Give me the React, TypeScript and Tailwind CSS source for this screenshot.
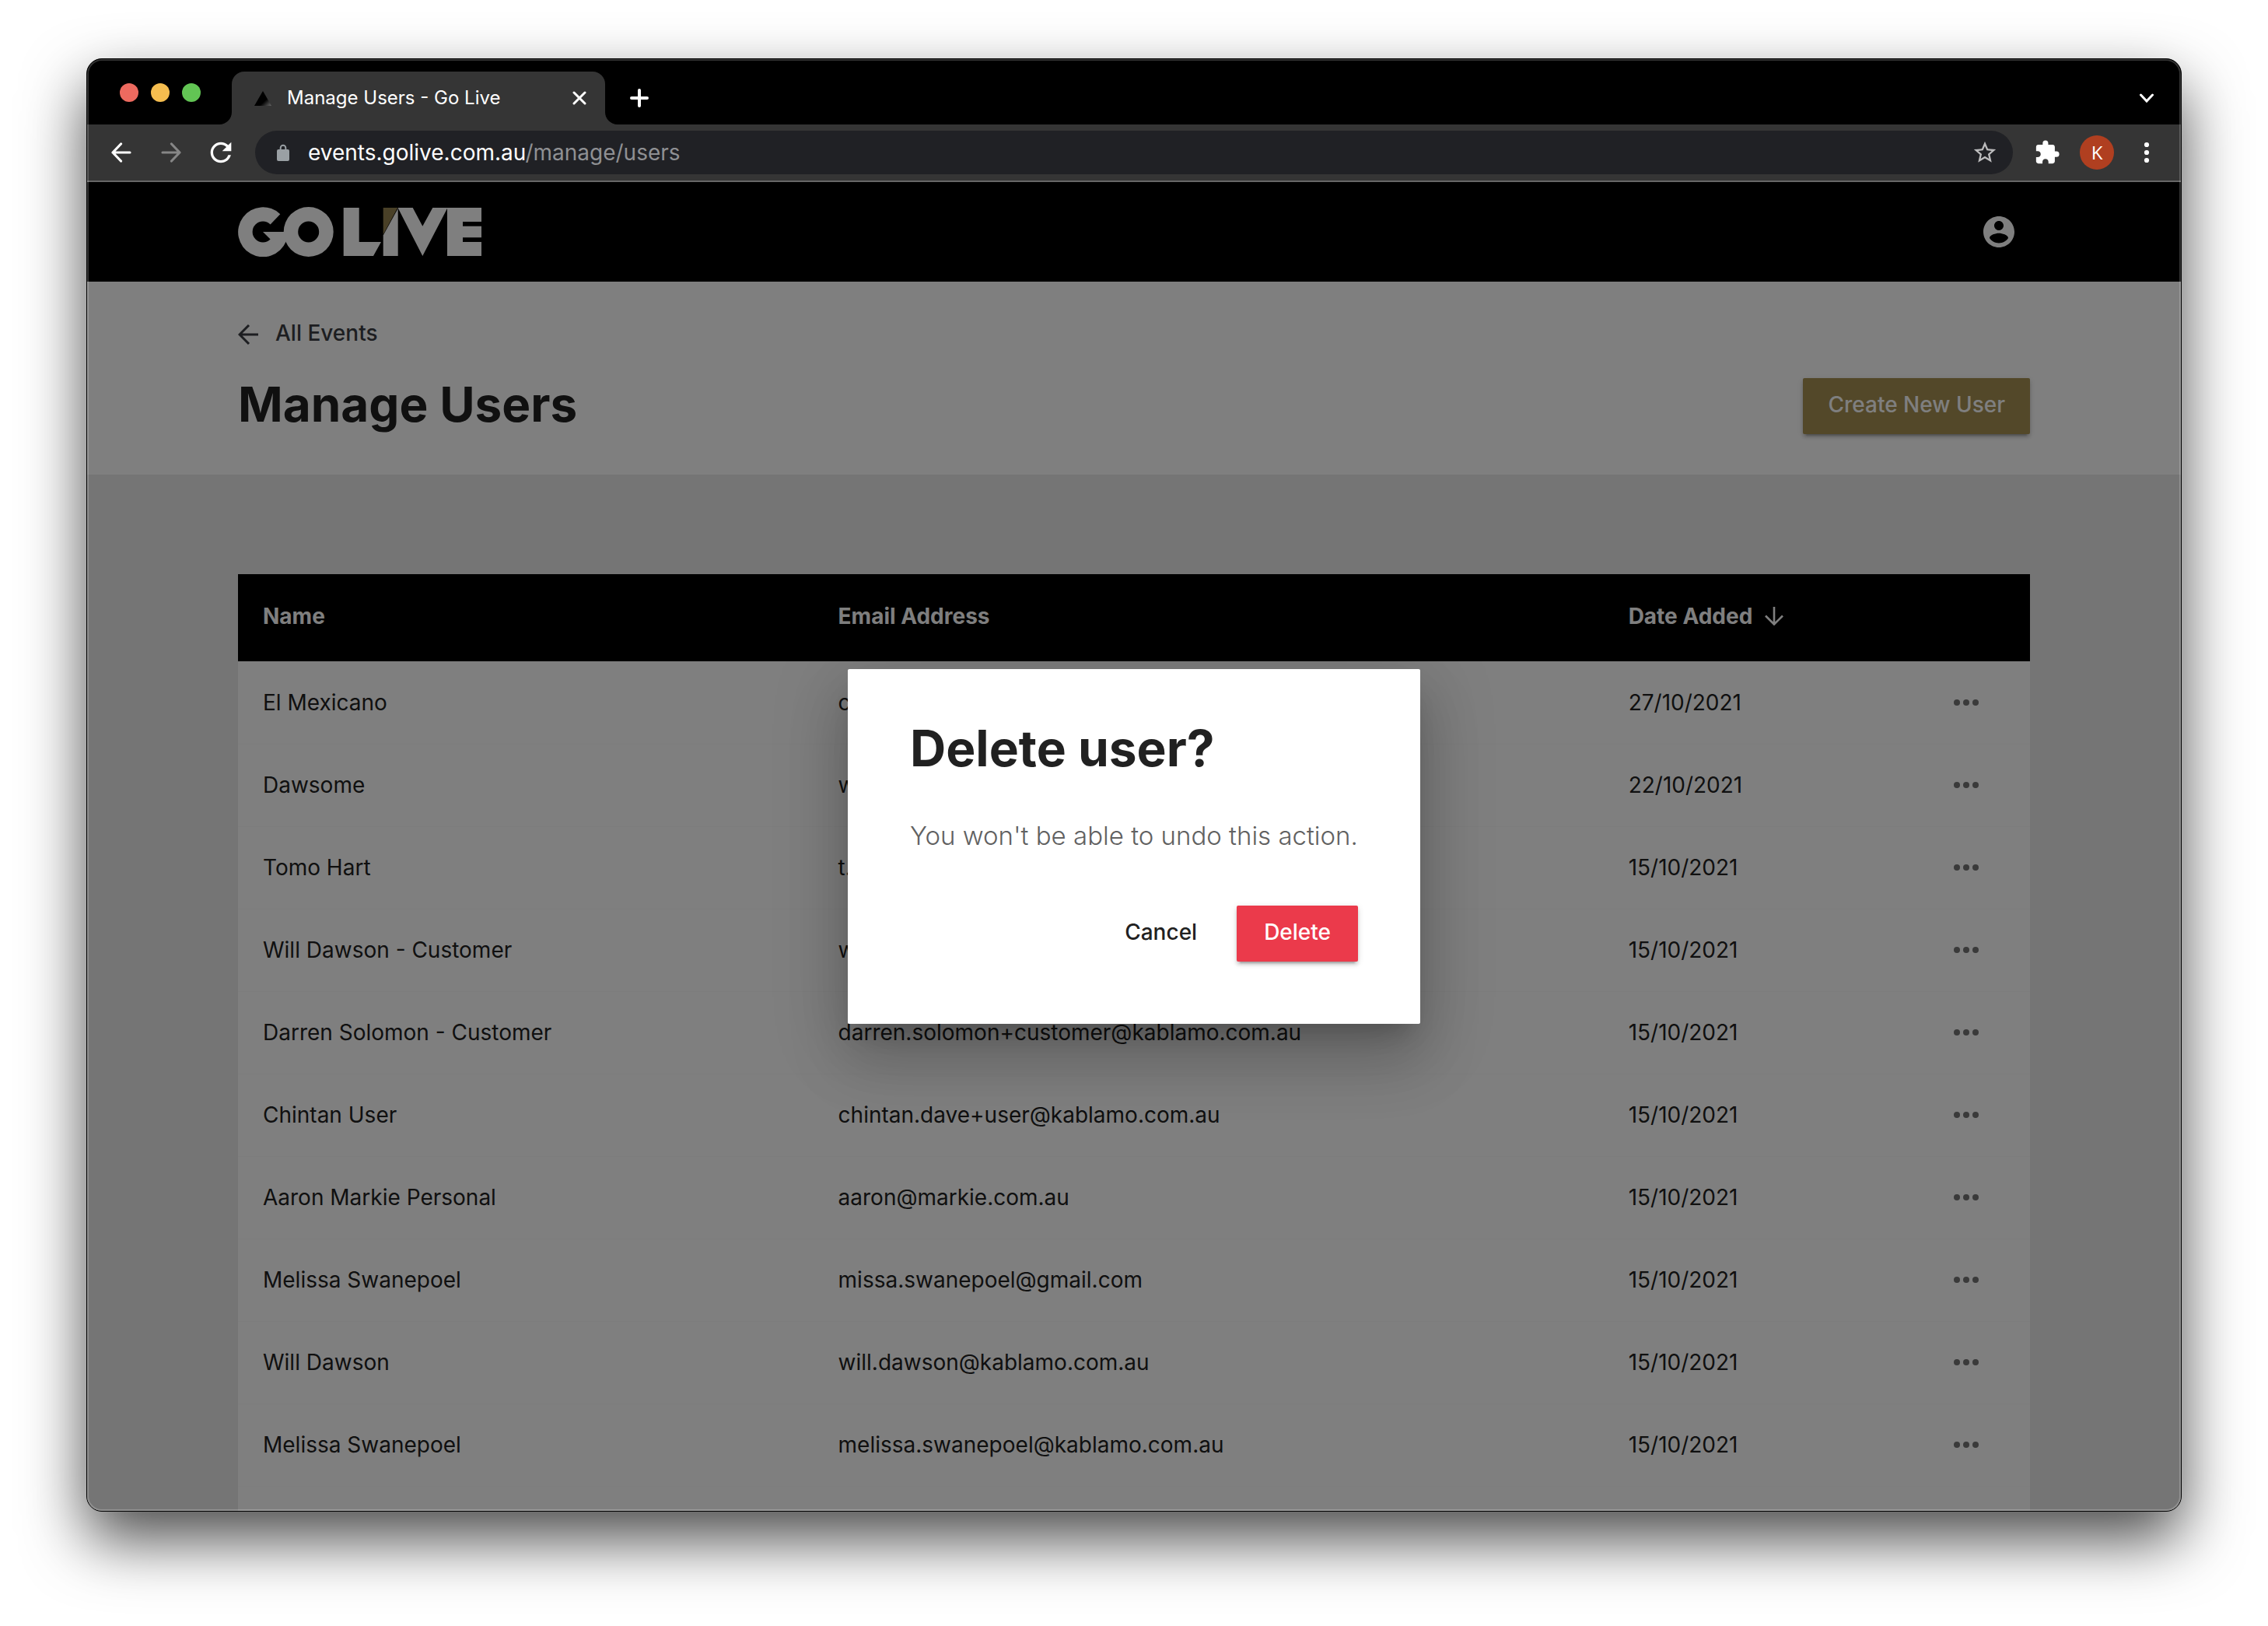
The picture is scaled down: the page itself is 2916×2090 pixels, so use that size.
import React from "react";
import { MdExtension, MdRefresh, MdStarBorder } from "react-icons/md";

type User = { name: string; email: string; added: string };

const users: User[] = [
  { name: "El Mexicano", email: "c.mexicano@kablamo.com.au", added: "27/10/2021" },
  { name: "Dawsome", email: "will.dawson+dawsome@kablamo.com.au", added: "22/10/2021" },
  { name: "Tomo Hart", email: "t.hart@kablamo.com.au", added: "15/10/2021" },
  { name: "Will Dawson - Customer", email: "will.dawson+customer@kablamo.com.au", added: "15/10/2021" },
  { name: "Darren Solomon - Customer", email: "darren.solomon+customer@kablamo.com.au", added: "15/10/2021" },
  { name: "Chintan User", email: "chintan.dave+user@kablamo.com.au", added: "15/10/2021" },
  { name: "Aaron Markie Personal", email: "aaron@markie.com.au", added: "15/10/2021" },
  { name: "Melissa Swanepoel", email: "missa.swanepoel@gmail.com", added: "15/10/2021" },
  { name: "Will Dawson", email: "will.dawson@kablamo.com.au", added: "15/10/2021" },
  { name: "Melissa Swanepoel", email: "melissa.swanepoel@kablamo.com.au", added: "15/10/2021" },
];

function Logo() {
  return (
    <svg width="313" height="64" viewBox="0 0 313 64" role="img" aria-label="Go Live" fill="#ffffff">
      {/* ring with an angled opening and a crossbar */}
      <path d="M54.3 9.2A32 32 0 1 0 61.7 44.5V32H32L41.6 41.6A13.5 13.5 0 1 1 41.6 22.4Z" />
      <path
        fillRule="evenodd"
        d="M90.7 0a32 32 0 1 0 0 64a32 32 0 1 0 0-64ZM90.7 18.5a13.5 13.5 0 1 1 0 27a13.5 13.5 0 1 1 0-27Z"
      />
      <path d="M135.7 1H155.7V45H184L174 63H135.7Z" />
      <path fill="#93804f" d="M186.7 1H205.2L186.7 35.5Z" />
      <path d="M205.7 2V63H186.7V36.5Z" />
      <path d="M205.5 1H224.7L237.3 24.7L250.3 1H269.5L237.3 63Z" />
      <path d="M269 1H313V19H289V24.7H313V39.3H289V45H313V63H269Z" />
    </svg>
  );
}

function Dots({ vertical = false }: { vertical?: boolean }) {
  return vertical ? (
    <svg width="8" height="28" viewBox="0 0 8 28" fill="currentColor" aria-hidden="true">
      <circle cx="4" cy="4" r="3.1" />
      <circle cx="4" cy="14" r="3.1" />
      <circle cx="4" cy="24" r="3.1" />
    </svg>
  ) : (
    <svg width="32" height="8" viewBox="0 0 32 8" fill="currentColor" aria-hidden="true">
      <circle cx="4" cy="4" r="4" />
      <circle cx="16" cy="4" r="4" />
      <circle cx="28" cy="4" r="4" />
    </svg>
  );
}

function NavArrow({ forward = false }: { forward?: boolean }) {
  return (
    <svg width="26" height="26" viewBox="0 0 26 26" fill="none" stroke="currentColor" strokeWidth="3.2" strokeLinecap="round" strokeLinejoin="round" aria-hidden="true">
      <path d={forward ? "M2 13H24M13.5 2L24 13L13.5 24" : "M24 13H2M12.5 2L2 13L12.5 24"} />
    </svg>
  );
}

function TabStrip() {
  return (
    <div className="flex items-center bg-black pt-4 pr-[35px] pl-[42px] text-white">
      <div className="mr-10 flex gap-4 pb-[14px]">
        <button aria-label="Close window" className="size-6 rounded-full bg-[#ed6a5f]" />
        <button aria-label="Minimise window" className="size-6 rounded-full bg-[#f5bd4f]" />
        <button aria-label="Zoom window" className="size-6 rounded-full bg-[#62c554]" />
      </div>
      <div className="relative flex h-[68px] w-[480px] items-center rounded-t-2xl bg-[#353535] pr-6 pl-[29px]">
        <svg className="absolute bottom-0 -left-4" width="16" height="16" viewBox="0 0 16 16" fill="#353535" aria-hidden="true">
          <path d="M16 0V16H0A16 16 0 0 0 16 0Z" />
        </svg>
        <svg className="absolute -right-4 bottom-0" width="16" height="16" viewBox="0 0 16 16" fill="#353535" aria-hidden="true">
          <path d="M0 0V16H16A16 16 0 0 1 0 0Z" />
        </svg>
        <svg width="22" height="19" viewBox="0 0 22 19" aria-hidden="true">
          <defs>
            <linearGradient id="favicon" x1="0.45" y1="0.5" x2="1" y2="1">
              <stop offset="0.3" stopColor="#000000" />
              <stop offset="1" stopColor="#6a6a6a" />
            </linearGradient>
          </defs>
          <path d="M11 0L22 19H0Z" fill="url(#favicon)" />
        </svg>
        <span className="ml-5 flex-1 text-2xl">Manage Users - Go Live</span>
        <button aria-label="Close tab">
          <svg width="18" height="18" viewBox="0 0 18 18" stroke="currentColor" strokeWidth="3" strokeLinecap="round" aria-hidden="true">
            <path d="M2 2L16 16M16 2L2 16" />
          </svg>
        </button>
      </div>
      <button aria-label="New tab" className="ml-8">
        <svg width="24" height="24" viewBox="0 0 24 24" stroke="currentColor" strokeWidth="4" strokeLinecap="round" aria-hidden="true">
          <path d="M12 2V22M2 12H22" />
        </svg>
      </button>
      <button aria-label="Search tabs" className="ml-auto">
        <svg width="18" height="12" viewBox="0 0 18 12" fill="none" stroke="currentColor" strokeWidth="3" strokeLinecap="round" aria-hidden="true">
          <path d="M1.5 2L9 10L16.5 2" />
        </svg>
      </button>
    </div>
  );
}

function Toolbar() {
  const slot = "flex h-14 w-16 items-center justify-center";
  return (
    <div className="flex items-center border-b-2 border-[#676767] bg-[#353535] px-3 py-2 text-white">
      <button aria-label="Back" className={slot}>
        <NavArrow />
      </button>
      <button aria-label="Forward" className={slot + " text-[#868686]"}>
        <NavArrow forward />
      </button>
      <button aria-label="Reload" className={slot}>
        <MdRefresh size={40} />
      </button>
      <div className="mx-3 flex h-14 flex-1 items-center rounded-full bg-[#202125] pr-[19px] pl-7">
        <svg width="16" height="22" viewBox="0 0 16 22" aria-hidden="true">
          <rect x="0" y="7" width="16" height="15" rx="2" fill="#9aa0a4" />
          <path d="M4.700 8V5A3.300 3.300 0 0 1 11.300 5V8" fill="none" stroke="#9aa0a4" strokeWidth="2" />
        </svg>
        <div className="ml-6 flex-1 text-[28px] leading-10 text-[#8f9093]">
          <span className="text-white">events.golive.com.au</span>/manage/users
        </div>
        <button aria-label="Bookmark this page" className="text-[#bcbcbd]">
          <MdStarBorder size={34} />
        </button>
      </div>
      <button aria-label="Extensions" className={slot}>
        <MdExtension size={34} />
      </button>
      <button aria-label="Profile" className={slot}>
        <span className="flex size-11 items-center justify-center rounded-full bg-[#b03f20] font-['Open_Sans',sans-serif] text-2xl">K</span>
      </button>
      <button aria-label="Menu" className={slot}>
        <Dots vertical />
      </button>
    </div>
  );
}

function SiteHeader() {
  return (
    <header className="bg-black px-[194px]">
      <div className="flex h-32 items-center justify-between pr-4">
        <Logo />
        <button aria-label="Account" className="text-white">
          <svg width="48" height="48" viewBox="0 0 24 24" fill="currentColor" aria-hidden="true">
            <path d="M12 2C6.480 2 2 6.480 2 12s4.480 10 10 10 10-4.480 10-10S17.520 2 12 2zm0 3c1.660 0 3 1.340 3 3s-1.340 3-3 3-3-1.340-3-3 1.340-3 3-3zm0 14.200c-2.500 0-4.710-1.280-6-3.220.03-1.990 4-3.080 6-3.080 1.990 0 5.970 1.090 6 3.080-1.290 1.940-3.500 3.220-6 3.220z" />
          </svg>
        </button>
      </div>
    </header>
  );
}

function PageTitle() {
  return (
    <section className="bg-white px-[194px] pt-[46px] pb-[52px]">
      <a href="#events" className="flex h-10 w-fit items-center gap-[22px] text-[28px] font-medium text-[#3a3d42]">
        <svg className="mt-1" width="26" height="26" viewBox="0 0 26 26" fill="none" stroke="currentColor" strokeWidth="3" aria-hidden="true">
          <path d="M26 13H2M14 1L2 13L14 25" />
        </svg>
        All Events
      </a>
      <div className="mt-[38px] flex h-[72px] items-center justify-between">
        <h1 className="pb-1 text-[62px] leading-[68px] font-bold text-[#212121]">Manage Users</h1>
        <button className="h-[72px] rounded-xs bg-[#a69052] px-8 pb-1 text-[28px] font-medium text-white shadow-[0_6px_2px_-4px_rgba(0,0,0,0.2),0_4px_4px_rgba(0,0,0,0.14),0_2px_10px_rgba(0,0,0,0.12)]">
          Create New User
        </button>
      </div>
    </section>
  );
}

function UserTable() {
  return (
    <table className="w-full table-fixed border-collapse text-left text-[28px] leading-10 text-[#212121]">
      <colgroup>
        <col className="w-[32.1%]" />
        <col className="w-[44.1%]" />
        <col />
        <col className="w-32" />
      </colgroup>
      <thead>
        <tr className="h-28 bg-black text-white">
          <th className="px-8 pb-1 font-bold">Name</th>
          <th className="px-8 pb-1 font-bold">Email Address</th>
          <th className="px-8 pb-1 font-bold" aria-sort="descending">
            <button className="flex items-center gap-4">
              Date Added
              <svg width="24" height="24" viewBox="0 0 24 24" fill="none" stroke="currentColor" strokeWidth="2.600" aria-hidden="true">
                <path d="M12 0V22M1 11.500L12 22.500L23 11.500" />
              </svg>
            </button>
          </th>
          <th aria-label="Actions" />
        </tr>
      </thead>
      <tbody>
        {users.map((user) => (
          <tr key={user.email} className="h-[106px] border-b border-[#fafafa]">
            <td className="px-8">{user.name}</td>
            <td className="px-8">{user.email}</td>
            <td className="px-8">{user.added}</td>
            <td className="text-[#757575]">
              <button aria-label={"Actions for " + user.name} className="ml-[30px] flex h-8 items-center">
                <Dots />
              </button>
            </td>
          </tr>
        ))}
      </tbody>
    </table>
  );
}

function DeleteDialog() {
  return (
    <div className="absolute inset-0 flex items-center justify-center bg-black/50">
      <div
        role="dialog"
        aria-modal="true"
        aria-labelledby="delete-title"
        className="w-[736px] rounded-xs bg-white px-20 pt-16 pb-20 shadow-[0_22px_30px_-14px_rgba(0,0,0,0.2),0_48px_76px_6px_rgba(0,0,0,0.14),0_18px_92px_16px_rgba(0,0,0,0.12)]"
      >
        <h2 id="delete-title" className="text-[64px] leading-[76px] font-bold text-[#212121]">
          Delete user?
        </h2>
        <p className="mt-[50px] text-[33px] leading-[48px] font-light whitespace-nowrap text-[#616161]">
          You won't be able to undo this action.
        </p>
        <div className="mt-[66px] flex justify-end gap-4">
          <button className="h-[72px] px-[35px] pb-1 text-[28px] font-medium text-[#212121]">Cancel</button>
          <button className="h-[72px] rounded-xs bg-[#eb3a4b] px-[35px] pb-1 text-[28px] font-medium text-white shadow-[0_6px_2px_-4px_rgba(0,0,0,0.2),0_4px_4px_rgba(0,0,0,0.14),0_2px_10px_rgba(0,0,0,0.12)]">
            Delete
          </button>
        </div>
      </div>
    </div>
  );
}

export default function App() {
  return (
    <div className="flex h-screen flex-col bg-white px-[111px] pt-[75px] pb-[147px] font-['Inter','Liberation_Sans',sans-serif]">
      <div className="relative flex min-h-0 flex-1 flex-col overflow-hidden rounded-[20px] border border-black bg-black shadow-[0_36px_80px_rgba(0,0,0,0.7)]">
        <TabStrip />
        <Toolbar />
        <div className="relative flex min-h-0 flex-1 flex-col overflow-hidden">
          <SiteHeader />
          <PageTitle />
          <main className="min-h-0 flex-1 overflow-hidden bg-[#ebebeb] px-[194px] pt-32">
            <div className="min-h-full bg-white">
              <UserTable />
            </div>
          </main>
          <DeleteDialog />
        </div>
        <div className="pointer-events-none absolute inset-0 rounded-[19px] border-2 border-white/20" />
      </div>
    </div>
  );
}
